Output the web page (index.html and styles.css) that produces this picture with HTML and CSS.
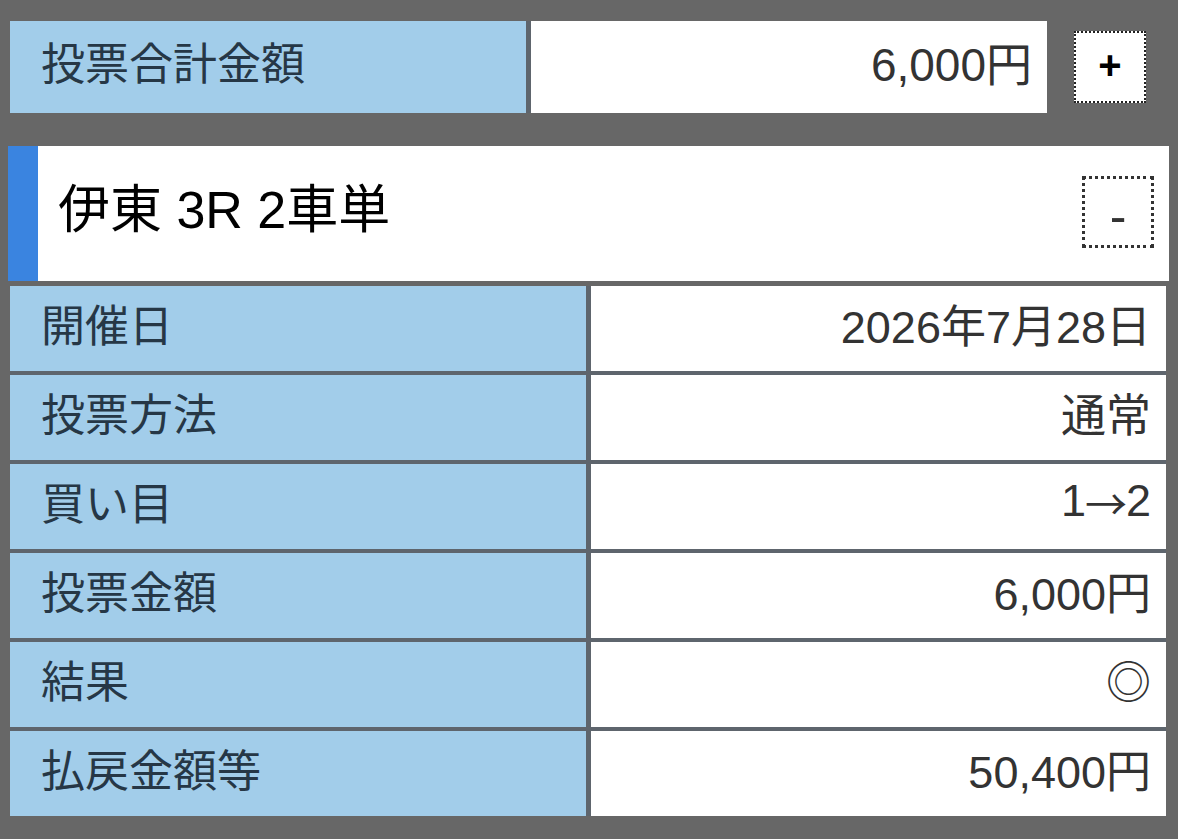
FILE: index.html
```html
<!DOCTYPE html>
<html lang="ja">
<head>
<meta charset="utf-8">
<title>投票内容</title>
<link rel="stylesheet" href="styles.css">
</head>
<body>
<div class="page">
  <div class="topbar">
    <div class="total">
      <div class="label">投票合計金額</div>
      <div class="value">6,000円</div>
    </div>
    <button class="toggle toggle-plus" type="button">+</button>
  </div>

  <div class="race">
    <div class="race-accent"></div>
    <div class="race-title">伊東 3R 2車単</div>
    <button class="toggle toggle-minus" type="button">-</button>
  </div>

  <div class="detail">
    <div class="label">開催日</div>
    <div class="value">2026年7月28日</div>
    <div class="label">投票方法</div>
    <div class="value">通常</div>
    <div class="label">買い目</div>
    <div class="value">1<span class="arrow">→</span>2</div>
    <div class="label">投票金額</div>
    <div class="value">6,000円</div>
    <div class="label">結果</div>
    <div class="value">◎</div>
    <div class="label">払戻金額等</div>
    <div class="value">50,400円</div>
  </div>
</div>
</body>
</html>
```

FILE: styles.css
```css
html, body {
  margin: 0;
  padding: 0;
  background: #676767;
}

.page {
  width: 1178px;
  height: 839px;
  box-sizing: border-box;
  padding: 21px 9px 0 8px;
  display: flex;
  flex-direction: column;
}

.topbar {
  display: flex;
  align-items: flex-start;
  margin-left: 2px;
  height: 92px;
}

.total {
  display: grid;
  grid-template-columns: 516px 516px;
  column-gap: 5px;
  background: #5e656d;
  height: 92px;
}

.label {
  background: #a2cdea;
  color: #263746;
  font-family: "Noto Sans CJK JP", sans-serif;
  font-size: 44px;
  display: flex;
  align-items: center;
  padding-left: 31px;
  padding-bottom: 11px;
}

.value {
  background: #ffffff;
  color: #333333;
  font-family: "Liberation Sans", "Noto Sans CJK JP", sans-serif;
  font-size: 45px;
  display: flex;
  align-items: center;
  justify-content: flex-end;
  padding-right: 15px;
  padding-bottom: 11px;
}

.total .label,
.total .value {
  padding-bottom: 13px;
}

.total .value {
  font-size: 46px;
}

.arrow {
  font-family: "Noto Sans CJK JP", sans-serif;
  font-size: 42px;
  margin: 0 -1px;
}

.toggle {
  width: 72px;
  height: 72px;
  box-sizing: border-box;
  background: #ffffff;
  color: #000000;
  padding: 0;
  margin: 0;
  font-family: "Liberation Sans", sans-serif;
  display: flex;
  align-items: center;
  justify-content: center;
}

.toggle-plus {
  margin-left: 27px;
  margin-top: 10px;
  border: 2px dotted #222222;
  font-size: 40px;
  font-weight: bold;
  padding-bottom: 4px;
}

.race {
  margin-top: 33px;
  height: 135px;
  background: #ffffff;
  display: flex;
  align-items: center;
}

.race-accent {
  width: 30px;
  align-self: stretch;
  background: #3a84e0;
}

.race-title {
  flex: 1;
  padding-left: 20px;
  padding-bottom: 16px;
  font-family: "Liberation Sans", "Noto Sans CJK JP", sans-serif;
  font-size: 52px;
  color: #000000;
}

.toggle-minus {
  margin-right: 15px;
  margin-top: -3px;
  border: 3px dotted #333333;
  font-size: 50px;
  font-weight: normal;
  color: #333333;
  padding-top: 8px;
}

.detail {
  margin: 5px 3px 0 2px;
  display: grid;
  grid-template-columns: 576px 1fr;
  grid-auto-rows: 85px;
  column-gap: 5px;
  row-gap: 4px;
  background: #5e656d;
}
```
